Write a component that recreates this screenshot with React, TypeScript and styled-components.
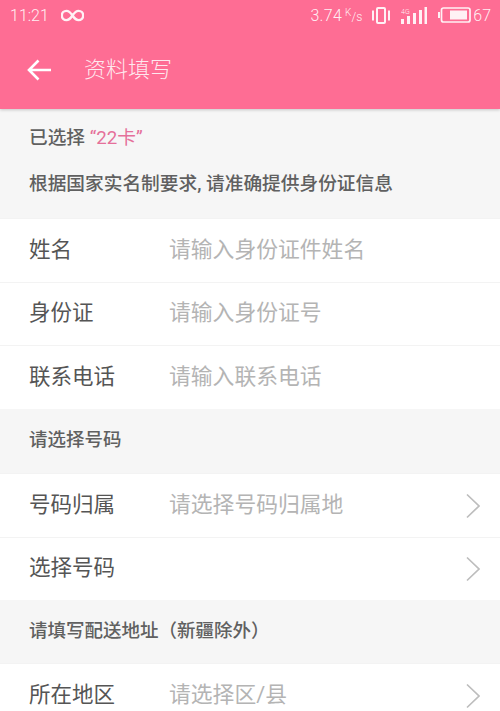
import styled, { createGlobalStyle } from 'styled-components';

const GlobalStyle = createGlobalStyle`
  html, body {
    margin: 0;
    padding: 0;
    background: #f6f6f6;
    overflow: hidden;
  }
  * {
    box-sizing: border-box;
  }
`;

const Page = styled.div`
  width: 500px;
  height: 711px;
  overflow: hidden;
  font-family: "Roboto", "Noto Sans CJK SC", sans-serif;
  background: #f6f6f6;
`;

const Header = styled.header`
  height: 109px;
  background: #fe6d94;
  color: #fff;
  box-shadow: 0 1px 3px rgba(0, 0, 0, 0.2);
  position: relative;
`;

const StatusBar = styled.div`
  height: 32px;
  padding: 0 9px 2px 10px;
  display: flex;
  align-items: center;
  justify-content: space-between;
  font-size: 16px;
  font-weight: 300;
  color: rgba(255, 255, 255, 0.9);
`;

const StatusGroup = styled.div`
  display: flex;
  align-items: center;
`;

const Speed = styled.span`
  font-size: 16px;
  letter-spacing: 0.3px;
`;

const SpeedUnit = styled.span`
  display: flex;
  align-items: flex-start;
  margin-left: 3px;
  font-size: 10px;
  line-height: 10px;
  margin-right: 10px;

  span:last-child {
    font-size: 12px;
    margin-top: 4px;
  }
`;

const BatteryLevel = styled.span`
  margin-left: 2px;
`;

const TitleBar = styled.div`
  height: 77px;
  padding: 0 0 2px 27px;
  display: flex;
  align-items: center;
`;

const Title = styled.h1`
  margin: 0 0 6px 32px;
  font-size: 22px;
  font-weight: 300;
  color: rgba(255, 255, 255, 0.85);
`;

const SectionHeading = styled.div<{ $height: number }>`
  height: ${(p) => p.$height}px;
  padding: 0 29px 6px;
  display: flex;
  align-items: center;
  font-size: 18.5px;
  font-weight: 500;
  color: #606060;
`;

const IntroBlock = styled.div`
  height: 109px;
  padding: 16px 29px 0;
  display: flex;
  flex-direction: column;
  gap: 20px;
  font-size: 18.7px;
  font-weight: 500;
  color: #606060;
  line-height: 26px;
`;

const Highlight = styled.span`
  font-weight: 400;
  color: #e5709a;
`;

const Form = styled.div`
  background: #fff;
`;

const Row = styled.div`
  height: 63.67px;
  padding: 0 20px 0 29px;
  display: flex;
  align-items: center;
  background: #fff;
  border-top: 1px solid #f3f3f3;
`;

const Label = styled.span`
  width: 140px;
  flex-shrink: 0;
  padding-bottom: 6px;
  font-size: 21.5px;
  color: #555;
`;

const Placeholder = styled.span`
  flex: 1;
  padding-bottom: 6px;
  font-size: 21.8px;
  color: #b4b4b4;
`;

const ChevronIcon = styled.svg`
  margin-left: auto;
  margin-top: 1px;
`;

const InfinityIcon = () => (
  <svg width="23" height="13" viewBox="0 0 24 14" fill="none" stroke="currentColor" strokeWidth="2.6" style={{ marginLeft: 12 }}>
    <path d="M12 7c-2-3-4-5-6.500-5a5 5 0 0 0 0 10c2.500 0 4.500-2 6.500-5s4-5 6.500-5a5 5 0 0 1 0 10c-2.500 0-4.500-2-6.500-5z" />
  </svg>
);

const VibrateIcon = () => (
  <svg width="18" height="17" viewBox="0 0 18 17" fill="none" stroke="currentColor">
    <rect x="5" y="1" width="8" height="15" rx="1" strokeWidth="2" />
    <path d="M1 3.500v10M17 3.500v10" strokeWidth="2" />
  </svg>
);

const SignalIcon = () => (
  <svg width="26" height="17" viewBox="0 0 26 17" fill="currentColor" style={{ marginLeft: 11 }}>
    <rect x="0" y="12" width="3" height="5" />
    <rect x="6" y="9" width="3" height="8" />
    <rect x="12" y="6" width="3" height="11" />
    <rect x="18" y="3" width="3" height="14" />
    <rect x="23.500" y="0" width="2.500" height="17" />
    <text x="0" y="7" fontSize="7" fontFamily="Roboto, sans-serif">4G</text>
  </svg>
);

const BatteryIcon = () => (
  <svg width="33" height="16" viewBox="0 0 33 16" fill="none" stroke="currentColor" style={{ marginLeft: 11 }}>
    <rect x="3.500" y="1" width="28.500" height="14" rx="2" strokeWidth="1.700" />
    <rect x="0" y="5" width="2" height="6" fill="currentColor" stroke="none" />
    <rect x="12" y="3.500" width="17" height="9" fill="currentColor" stroke="none" />
  </svg>
);

const BackArrow = () => (
  <svg width="25" height="22" viewBox="0 0 25 22" fill="none" stroke="#fff" strokeWidth="2.6">
    <path d="M24 11H2M11.500 1.500L2 11l9.500 9.500" />
  </svg>
);

const Chevron = () => (
  <ChevronIcon width="14" height="26" viewBox="0 0 14 26" fill="none" stroke="#bdbdbd" strokeWidth="1.7">
    <path d="M1 1.500L13 13 1 24.500" />
  </ChevronIcon>
);

const App = () => {
  return (
    <Page>
      <GlobalStyle />
      <Header>
        <StatusBar>
          <StatusGroup>
            11:21
            <InfinityIcon />
          </StatusGroup>
          <StatusGroup>
            <Speed>3.74</Speed>
            <SpeedUnit>
              <span>K</span>
              <span>/s</span>
            </SpeedUnit>
            <VibrateIcon />
            <SignalIcon />
            <BatteryIcon />
            <BatteryLevel>67</BatteryLevel>
          </StatusGroup>
        </StatusBar>
        <TitleBar>
          <BackArrow />
          <Title>资料填写</Title>
        </TitleBar>
      </Header>

      <IntroBlock>
        <div>
          已选择 <Highlight>“22卡”</Highlight>
        </div>
        <div>根据国家实名制要求, 请准确提供身份证信息</div>
      </IntroBlock>

      <Form>
        <Row>
          <Label>姓名</Label>
          <Placeholder>请输入身份证件姓名</Placeholder>
        </Row>
        <Row>
          <Label>身份证</Label>
          <Placeholder>请输入身份证号</Placeholder>
        </Row>
        <Row>
          <Label>联系电话</Label>
          <Placeholder>请输入联系电话</Placeholder>
        </Row>
      </Form>

      <SectionHeading $height={64}>请选择号码</SectionHeading>

      <Form>
        <Row>
          <Label>号码归属</Label>
          <Placeholder>请选择号码归属地</Placeholder>
          <Chevron />
        </Row>
        <Row>
          <Label>选择号码</Label>
          <Chevron />
        </Row>
      </Form>

      <SectionHeading $height={63}>请填写配送地址（新疆除外）</SectionHeading>

      <Form>
        <Row>
          <Label>所在地区</Label>
          <Placeholder>请选择区/县</Placeholder>
          <Chevron />
        </Row>
      </Form>
    </Page>
  );
};

export default App;
